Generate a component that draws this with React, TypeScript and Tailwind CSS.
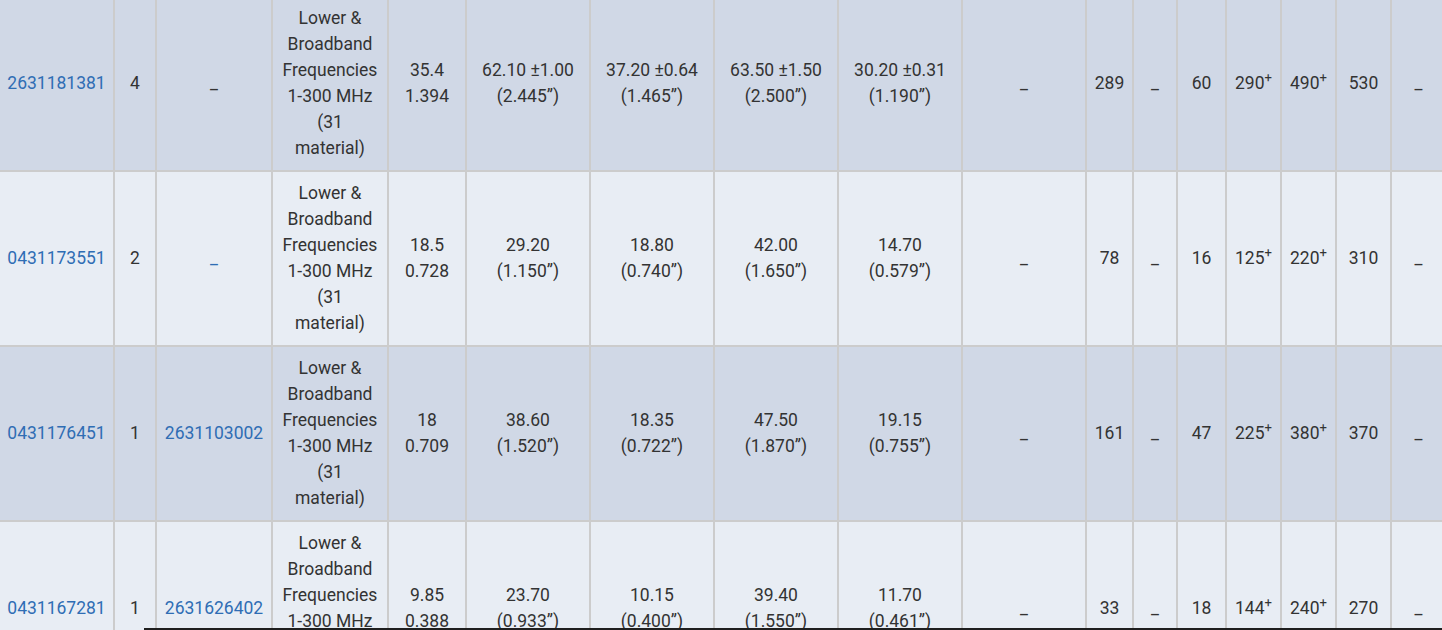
import React from "react";

type Cell = { t: React.ReactNode; link?: boolean };

const Desc = () => (
  <span>
    Lower &amp;
    <br />
    Broadband
    <br />
    Frequencies
    <br />
    1-300 MHz
    <br />
    (31
    <br />
    material)
  </span>
);

const Two = ({ a, b }: { a: string; b: string }) => (
  <span>
    {a}
    <br />
    {b}
  </span>
);

const Plus = ({ v }: { v: string }) => (
  <span>
    {v}
    <sup>+</sup>
  </span>
);

const Dash = () => <span>_</span>;

type Row = {
  part: string;
  qty: string;
  alt: string | null;
  altLink?: boolean;
  d1: [string, string];
  d2: [string, string];
  d3: [string, string];
  d4: [string, string];
  d5: [string, string];
  n1: string;
  n2: string;
  p1: string;
  p2: string;
  n3: string;
};

const rows: Row[] = [
  {
    part: "2631181381",
    qty: "4",
    alt: null,
    d1: ["35.4", "1.394"],
    d2: ["62.10 ±1.00", "(2.445”)"],
    d3: ["37.20 ±0.64", "(1.465”)"],
    d4: ["63.50 ±1.50", "(2.500”)"],
    d5: ["30.20 ±0.31", "(1.190”)"],
    n1: "289",
    n2: "60",
    p1: "290",
    p2: "490",
    n3: "530",
  },
  {
    part: "0431173551",
    qty: "2",
    alt: null,
    altLink: true,
    d1: ["18.5", "0.728"],
    d2: ["29.20", "(1.150”)"],
    d3: ["18.80", "(0.740”)"],
    d4: ["42.00", "(1.650”)"],
    d5: ["14.70", "(0.579”)"],
    n1: "78",
    n2: "16",
    p1: "125",
    p2: "220",
    n3: "310",
  },
  {
    part: "0431176451",
    qty: "1",
    alt: "2631103002",
    d1: ["18", "0.709"],
    d2: ["38.60", "(1.520”)"],
    d3: ["18.35", "(0.722”)"],
    d4: ["47.50", "(1.870”)"],
    d5: ["19.15", "(0.755”)"],
    n1: "161",
    n2: "47",
    p1: "225",
    p2: "380",
    n3: "370",
  },
  {
    part: "0431167281",
    qty: "1",
    alt: "2631626402",
    d1: ["9.85", "0.388"],
    d2: ["23.70", "(0.933”)"],
    d3: ["10.15", "(0.400”)"],
    d4: ["39.40", "(1.550”)"],
    d5: ["11.70", "(0.461”)"],
    n1: "33",
    n2: "18",
    p1: "144",
    p2: "240",
    n3: "270",
  },
];

function TableRow({ r, i }: { r: Row; i: number }) {
  const bg = i % 2 === 0 ? "bg-[#d0d8e6]" : "bg-[#e8edf4]";
  const cells: Cell[] = [
    { t: r.part, link: true },
    { t: r.qty },
    r.alt ? { t: r.alt, link: true } : { t: <Dash />, link: !!r.altLink },
    { t: <Desc /> },
    { t: <Two a={r.d1[0]} b={r.d1[1]} /> },
    { t: <Two a={r.d2[0]} b={r.d2[1]} /> },
    { t: <Two a={r.d3[0]} b={r.d3[1]} /> },
    { t: <Two a={r.d4[0]} b={r.d4[1]} /> },
    { t: <Two a={r.d5[0]} b={r.d5[1]} /> },
    { t: <Dash /> },
    { t: r.n1 },
    { t: <Dash /> },
    { t: r.n2 },
    { t: <Plus v={r.p1} /> },
    { t: <Plus v={r.p2} /> },
    { t: r.n3 },
    { t: <Dash /> },
  ];
  return (
    <div
      className={`grid grid-cols-[115px_42px_116px_116px_78px_124px_124px_124px_124px_124px_47px_44px_49px_55px_55px_55px_55px] ${bg}`}
    >
      {cells.map((c, k) => (
        <div
          key={k}
          className={`flex h-[175px] items-center justify-center whitespace-nowrap border-b-2 border-r-2 border-[#cccccc] pb-[1px] text-center ${
            c.link ? "text-[#2f6db4]" : "text-[#333333]"
          }`}
        >
          {c.t}
        </div>
      ))}
    </div>
  );
}

export default function App() {
  return (
    <div
      className="relative h-[630px] w-[1442px] overflow-hidden bg-white text-[17.5px] leading-[26px]"
      style={{ fontFamily: "Roboto, 'Liberation Sans', sans-serif" }}
    >
      <div className="-mt-[3px] w-[1447px]">
        {rows.map((r, i) => (
          <TableRow key={i} r={r} i={i} />
        ))}
      </div>
      <div className="absolute left-[144px] right-0 top-[628px] h-[2px] bg-[#1f1f1f]" />
    </div>
  );
}
